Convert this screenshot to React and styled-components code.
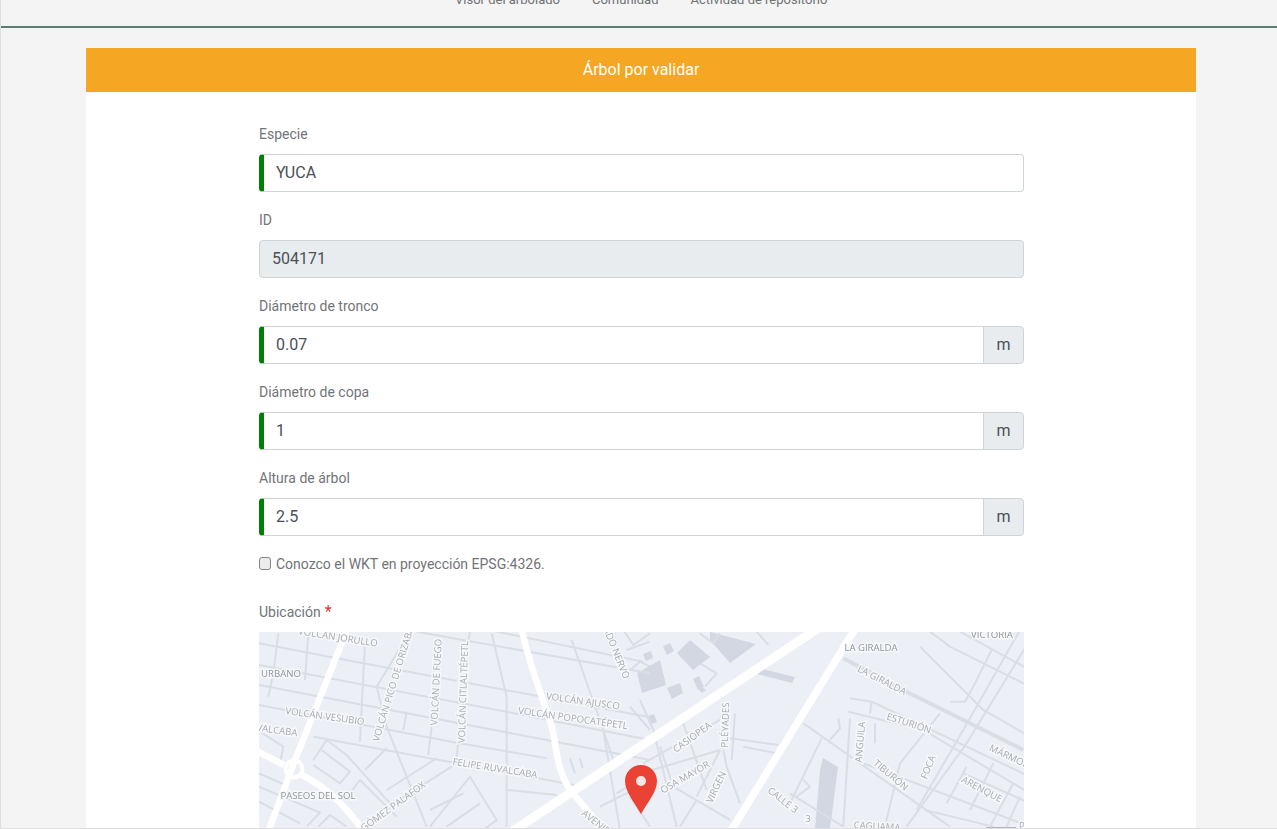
import React from "react";
import styled, { createGlobalStyle } from "styled-components";

const Global = createGlobalStyle`
  html, body { margin: 0; padding: 0; height: 100%; overflow: hidden; background: #f4f4f4; }
  * { box-sizing: border-box; }
`;

const Page = styled.div`
  height: 829px;
  overflow: hidden;
  background: #f4f4f4;
  border-left: 1px solid #dedede;
  border-bottom: 1px solid #dedede;
  font-family: Roboto, "Liberation Sans", sans-serif;
  display: flex;
  flex-direction: column;
`;
const Header = styled.header`
  flex: none;
  height: 28px;
  overflow: hidden;
  border-bottom: 2px solid;
  border-image: linear-gradient(#9c9c9c 50%, #5a7f70 50%) 1;
`;
const Nav = styled.nav`
  display: flex;
  gap: 32px;
  margin: -10px 0 0 454px;
`;
const NavLink = styled.a`
  font-size: 13px;
  line-height: 20px;
  color: #6e7276;
  white-space: nowrap;
`;
const Card = styled.main`
  flex: none;
  width: 1110px;
  margin: 20px 0 0 85px;
  background: #fff;
`;
const CardTitle = styled.h1`
  margin: 0;
  height: 44px;
  background: #f5a623;
  color: #fff;
  font-size: 16px;
  font-weight: 400;
  line-height: 44px;
  text-align: center;
`;
const Form = styled.form`
  width: 765px;
  margin: 0 0 0 173px;
  padding-top: 30px;
`;
const Group = styled.div`
  margin-bottom: 16px;
`;
const Label = styled.label`
  display: block;
  margin-bottom: 8px;
  font-size: 14px;
  line-height: 24px;
  color: #717478;
`;
const Required = styled.span`
  color: #e0333c;
  font-size: 16px;
  margin-left: 4px;
`;
const InputRow = styled.div`
  display: flex;
  height: 38px;
`;
const Input = styled.input`
  flex: 1;
  min-width: 0;
  height: 38px;
  padding: 5px 12px 7px;
  border: 1px solid #ced4da;
  border-left: ${(p) => (p.$valid ? "5px solid #008000" : "1px solid #ced4da")};
  border-radius: ${(p) => (p.$addon ? "4px 0 0 4px" : "4px")};
  background: ${(p) => (p.disabled ? "#e9ecef" : "#fff")};
  color: #495057;
  font: 400 16px/24px Roboto, "Liberation Sans", sans-serif;
  outline: none;
  opacity: 1;
  -webkit-text-fill-color: #495057;
`;
const Addon = styled.span`
  flex: none;
  width: 41px;
  margin-left: -1px;
  padding-bottom: 2px;
  display: flex;
  align-items: center;
  justify-content: center;
  border: 1px solid #ced4da;
  border-radius: 0 4px 4px 0;
  background: #e9ecef;
  color: #495057;
  font-size: 16px;
`;
const CheckRow = styled.label`
  display: flex;
  align-items: center;
  height: 24px;
  margin-bottom: 24px;
  font-size: 14px;
  color: #717478;
`;
const Check = styled.input`
  appearance: none;
  width: 12px;
  height: 13px;
  margin: 0 5px 0 0;
  position: relative;
  top: -1px;
  background: #ececec;
  border: 1px solid #858585;
  border-radius: 3px;
`;
const MapFrame = styled.div`
  width: 765px;
  height: 197px;
  overflow: hidden;
  background: #eceff5;
`;
const MapSvg = styled.svg`
  display: block;
  filter: blur(0.45px);
`;
const MapLabel = styled.text`
  font-family: "Open Sans", "Liberation Sans", sans-serif;
  font-size: 9.6px;
  fill: ${(p) => (p.$dark ? "#8f949c" : "#a6aab1")};
  stroke: rgba(247, 248, 251, 0.9);
  stroke-width: 3px;
  paint-order: stroke;
  text-anchor: middle;
  dominant-baseline: central;
`;

const streetsLeft = [
  "27,40 300,92 820,190 1200,262",
  "27,105 820,255 1200,330",
  "27,165 890,330 1200,390",
  "27,225 620,338 890,385",
  "190,320 1000,470",
  "500,5 1200,130",
  "740,5 1180,95",
  "85,10 70,130 55,200",
  "175,10 165,150",
  "345,40 330,335",
  "470,245 460,300",
  "545,290 535,375",
  "625,335 620,380",
  "660,5 650,60",
  "725,10 770,200 770,590",
  "965,30 1060,300 1090,390",
  "480,5 380,170 410,290 530,590",
  "30,305 100,350 92,390",
  "215,360 300,425 270,460 190,405",
  "190,390 230,330 290,375 420,520",
  "300,490 330,450 440,560",
  "27,430 100,462",
  "27,470 210,548 170,590",
  "27,515 150,580",
  "345,420 410,355",
  "410,480 560,385",
  "440,515 620,400",
  "540,590 660,440 740,570 700,600",
  "540,540 640,490",
  "590,590 690,520",
  "205,590 240,555 290,590",
  "775,480 920,495",
  "960,385 975,430",
  "990,385 998,415",
  "1120,0 1150,45 1200,10",
  "1130,60 1200,35",
  "1060,300 1110,600",
  "1100,490 1200,430",
  "1050,530 1200,455",
];
const streetsRight = [
  "660,205 725,215 1200,440",
  "655,245 880,300 1200,490",
  "870,50 1060,240 1200,320",
  "1170,0 1000,300 860,540",
  "1200,30 1010,340 830,590",
  "960,215 1005,215 1030,170 1085,60",
  "900,5 960,50 1200,170",
  "990,5 1200,120",
  "520,280 960,590",
  "575,325 480,520",
  "660,265 640,590",
  "725,215 720,250",
  "735,280 735,340",
  "930,250 810,400 765,590",
  "625,265 630,295 600,330",
  "0,230 60,300",
  "30,210 70,300 140,590",
  "300,325 445,345",
  "340,350 440,370",
  "270,360 200,500",
  "0,440 270,360",
  "40,400 270,270",
  "280,360 290,410 330,520",
  "90,350 130,470 300,570",
  "315,250 305,390",
  "160,280 230,480",
  "0,500 60,590",
  "150,590 200,510",
  "480,490 640,590",
  "520,450 540,470 500,500",
  "885,540 1090,590",
  "950,520 1010,410",
  "1020,540 1090,400",
  "1080,590 1150,460",
  "1130,590 1170,500",
  "700,400 1200,590",
  "1000,430 1200,520",
  "210,10 250,40 270,10",
  "380,5 415,45",
  "0,120 30,95 60,110",
  "210,100 260,130 225,170",
];
const thickRight = ["640,85 830,185 1020,280 1180,360"];

const buildings = [
  "451,0 497,12 471,31 451,8",
  "418,21 431,8 451,25 434,38",
  "378,41 401,28 407,53 383,61",
  "408,56 421,51 424,61 413,67",
  "499,36 536,45 533,51 498,42",
  "564,126 579,135 571,197 556,197 561,138",
  "404,14 411,11 415,19 408,23",
  "384,22 392,19 394,26 387,29",
  "389,84 395,82 398,90 392,92",
  "434,47 440,44 445,55 439,58",
  "440,58 443,55 447,58 443,61",
];

const labels = [
  ["VOLCÁN JORULLO", 79, 5, 9],
  ["URBANO", 22, 41, 0, true],
  ["VOLCÁN PICO DE ORIZABA", 134, 52, -73],
  ["VOLCÁN DE FUEGO", 177, 50, -87],
  ["VOLCÁN CITLALTÉPETL", 204, 60, -88],
  ["AMADO NERVO", 355, 14, 68],
  ["VOLCÁN AJUSCO", 324, 69, 8],
  ["VOLCÁN POPOCATÉPETL", 314, 86, 8],
  ["VOLCÁN VESUBIO", 66, 84, 8],
  ["VALCABA", 18, 98, 8],
  ["FELIPE RUVALCABA", 236, 136, 9],
  ["PASEOS DEL SOL", 59, 163, 0, true],
  ["GÓMEZ PALAFOX", 134, 174, -36],
  ["AVENIDA", 340, 192, 38],
  ["LA GIRALDA", 612, 15, 0, true],
  ["VICTORIA", 733, 2, 0, true],
  ["LA GIRALDA", 623, 48, 27],
  ["ESTURIÓN", 650, 91, 18],
  ["MÁRMOL", 750, 124, 25],
  ["ARENQUE", 723, 157, 28],
  ["FOCA", 669, 135, -68],
  ["TIBURÓN", 632, 143, 40],
  ["ANGUILA", 601, 110, -85],
  ["CASIOPEA", 433, 105, -36],
  ["PLÉYADES", 466, 93, -88],
  ["OSA MAYOR", 426, 145, -30],
  ["VIRGEN", 457, 155, -65],
  ["CALLE 3", 524, 168, 38],
  ["3", 549, 186, 0],
  ["CAGUAMA", 618, 194, 3],
  ["P", 763, 193, 0],
];

function MapView() {
  return (
    <MapSvg width="765" height="197" viewBox="0 0 765 197">
      <g fill="#d3d7e1">
        {buildings.map((b) => (
          <polygon key={b} points={b} />
        ))}
      </g>
      <g fill="none" stroke="#d9dde6" strokeWidth="6" strokeLinejoin="round" transform="translate(-9,-2) scale(.3333)">
        {streetsLeft.map((s) => (
          <polyline key={s} points={s} />
        ))}
      </g>
      <g fill="none" stroke="#d9dde6" strokeWidth="6" strokeLinejoin="round" transform="translate(371,-2) scale(.3333)">
        {streetsRight.map((s) => (
          <polyline key={s} points={s} />
        ))}
        {thickRight.map((s) => (
          <polyline key={s} points={s} strokeWidth="12" />
        ))}
      </g>
      <g fill="none" stroke="#ffffff" strokeLinecap="butt" strokeLinejoin="round">
        <g strokeWidth="6.5">
          <polyline points="88,-2 36,128 9,200" />
          <polyline points="-2,119 25,133" />
          <path d="M43,143 C68,156 88,175 104,199" />
          <path d="M263,-2 C268,25 282,62 292,92 C298,112 296,135 311,158 L346,199" />
        </g>
        <polyline strokeWidth="9" points="254,199 558,-3" />
        <polyline strokeWidth="7.5" points="596,-3 472,199" />
        <circle cx="35" cy="137" r="8.5" strokeWidth="4" />
      </g>
      {labels.map(([t, x, y, r, dark]) => (
        <MapLabel key={t + x} $dark={dark} x={x} y={y} transform={`rotate(${r} ${x} ${y})`}>
          {t}
        </MapLabel>
      ))}
      <rect x="727" y="195" width="30" height="2" fill="#b5b7bb" />
      <path
        d="M382,133 C373,133 366,140 366,149 C366,160 376,171 382,182 C388,171 398,160 398,149 C398,140 391,133 382,133 Z"
        fill="#ea4335"
      />
      <circle cx="382" cy="149" r="5" fill="#f3e6e4" />
    </MapSvg>
  );
}

function Field({ label, value, valid, disabled, addon }) {
  return (
    <Group>
      <Label>{label}</Label>
      <InputRow>
        <Input value={value} readOnly disabled={disabled} $valid={valid} $addon={!!addon} />
        {addon && <Addon>{addon}</Addon>}
      </InputRow>
    </Group>
  );
}

export default function App() {
  return (
    <Page>
      <Global />
      <Header>
        <Nav>
          <NavLink>Visor del arbolado</NavLink>
          <NavLink>Comunidad</NavLink>
          <NavLink>Actividad de repositorio</NavLink>
        </Nav>
      </Header>
      <Card>
        <CardTitle>Árbol por validar</CardTitle>
        <Form>
          <Field label="Especie" value="YUCA" valid />
          <Field label="ID" value="504171" disabled />
          <Field label="Diámetro de tronco" value="0.07" valid addon="m" />
          <Field label="Diámetro de copa" value="1" valid addon="m" />
          <Field label="Altura de árbol" value="2.5" valid addon="m" />
          <CheckRow>
            <Check type="checkbox" />
            Conozco el WKT en proyección EPSG:4326.
          </CheckRow>
          <Label>
            Ubicación<Required>*</Required>
          </Label>
          <MapFrame>
            <MapView />
          </MapFrame>
        </Form>
      </Card>
    </Page>
  );
}
